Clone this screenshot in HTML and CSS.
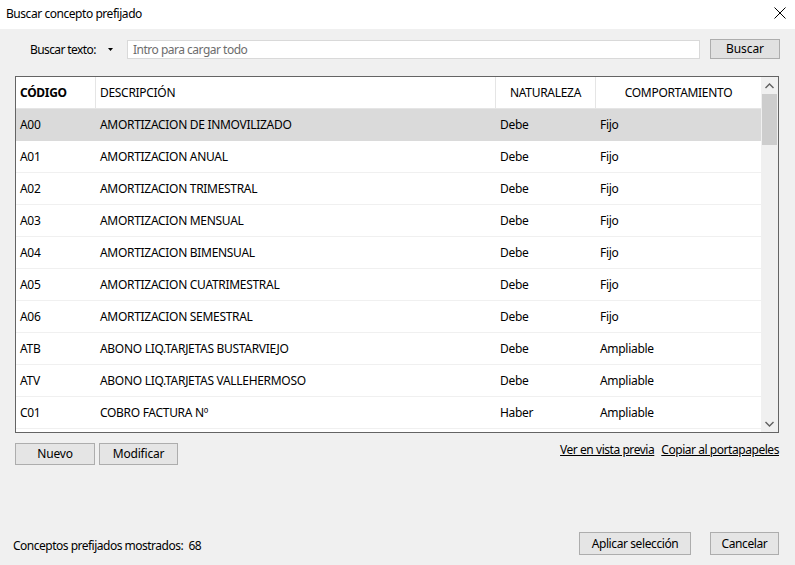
FILE: index.html
```html
<!DOCTYPE html>
<html lang="es">
<head>
<meta charset="utf-8">
<title>Buscar concepto prefijado</title>
<link rel="stylesheet" href="styles.css">
</head>
<body>
<div class="window">
  <div class="titlebar">
    <span class="title">Buscar concepto prefijado</span>
    <svg class="close" width="12" height="12" viewBox="0 0 12 12"><path d="M0.5 0.5 L11.5 11.5 M11.5 0.5 L0.5 11.5" stroke="#000" stroke-width="1" fill="none"/></svg>
  </div>
  <div class="search">
    <span class="search-label">Buscar texto:</span>
    <svg class="caret" width="5" height="3" viewBox="0 0 5 3"><path d="M0 0 H5 L2.5 3 Z" fill="#000"/></svg>
    <div class="input">Intro para cargar todo</div>
    <button class="btn btn-search">Buscar</button>
  </div>
  <div class="grid">
    <div class="grid-main">
      <div class="row head">
        <div class="c c1 bold">CÓDIGO</div>
        <div class="c c2">DESCRIPCIÓN</div>
        <div class="c c3 center">NATURALEZA</div>
        <div class="c c4 center">COMPORTAMIENTO</div>
      </div>
      <div class="row sel"><div class="c c1">A00</div><div class="c c2">AMORTIZACION DE INMOVILIZADO</div><div class="c c3">Debe</div><div class="c c4">Fijo</div></div>
      <div class="row"><div class="c c1">A01</div><div class="c c2">AMORTIZACION ANUAL</div><div class="c c3">Debe</div><div class="c c4">Fijo</div></div>
      <div class="row"><div class="c c1">A02</div><div class="c c2">AMORTIZACION TRIMESTRAL</div><div class="c c3">Debe</div><div class="c c4">Fijo</div></div>
      <div class="row"><div class="c c1">A03</div><div class="c c2">AMORTIZACION MENSUAL</div><div class="c c3">Debe</div><div class="c c4">Fijo</div></div>
      <div class="row"><div class="c c1">A04</div><div class="c c2">AMORTIZACION BIMENSUAL</div><div class="c c3">Debe</div><div class="c c4">Fijo</div></div>
      <div class="row"><div class="c c1">A05</div><div class="c c2">AMORTIZACION CUATRIMESTRAL</div><div class="c c3">Debe</div><div class="c c4">Fijo</div></div>
      <div class="row"><div class="c c1">A06</div><div class="c c2">AMORTIZACION SEMESTRAL</div><div class="c c3">Debe</div><div class="c c4">Fijo</div></div>
      <div class="row"><div class="c c1">ATB</div><div class="c c2">ABONO LIQ.TARJETAS BUSTARVIEJO</div><div class="c c3">Debe</div><div class="c c4">Ampliable</div></div>
      <div class="row"><div class="c c1">ATV</div><div class="c c2">ABONO LIQ.TARJETAS VALLEHERMOSO</div><div class="c c3">Debe</div><div class="c c4">Ampliable</div></div>
      <div class="row"><div class="c c1">C01</div><div class="c c2">COBRO FACTURA Nº</div><div class="c c3">Haber</div><div class="c c4">Ampliable</div></div>
      <div class="row"><div class="c c1"></div><div class="c c2"></div><div class="c c3"></div><div class="c c4"></div></div>
    </div>
    <div class="scrollbar">
      <div class="arrow"><svg width="9" height="6" viewBox="0 0 9 6"><path d="M0.5 5 L4.5 1 L8.5 5" stroke="#606060" stroke-width="1.4" fill="none"/></svg></div>
      <div class="track"><div class="thumb"></div></div>
      <div class="arrow"><svg width="9" height="6" viewBox="0 0 9 6"><path d="M0.5 1 L4.5 5 L8.5 1" stroke="#606060" stroke-width="1.4" fill="none"/></svg></div>
    </div>
  </div>
  <div class="actions">
    <button class="btn btn-small">Nuevo</button>
    <button class="btn btn-small">Modificar</button>
    <div class="links">
      <a class="link">Ver en vista previa</a>
      <a class="link">Copiar al portapapeles</a>
    </div>
  </div>
  <div class="footer">
    <span class="count">Conceptos prefijados mostrados:&nbsp; 68</span>
    <div class="footer-btns">
      <button class="btn btn-apply">Aplicar selección</button>
      <button class="btn btn-cancel">Cancelar</button>
    </div>
  </div>
</div>
</body>
</html>
```
FILE: styles.css
```css
* { box-sizing: border-box; }
html, body { margin: 0; padding: 0; }
body {
  width: 795px;
  height: 565px;
  overflow: hidden;
  background: #f0f0f0;
  font-family: "Noto Sans", "Open Sans", sans-serif;
  font-size: 12px;
  color: #000;
}
.window { display: flex; flex-direction: column; height: 565px; }
.titlebar {
  height: 29px;
  background: #fff;
  display: flex;
  align-items: center;
  justify-content: space-between;
  padding: 0 9px 0 6px;
  flex-shrink: 0;
}
.title { font-size: 12px; letter-spacing: -0.45px; margin-top: -2px; }
.close { margin-top: -4px; }
.search {
  display: flex;
  align-items: center;
  height: 20px;
  margin-top: 10px;
  padding-left: 30px;
}
.search-label { letter-spacing: -0.6px; width: 78px; }
.caret { margin-left: 0; margin-right: 14px; }
.input {
  width: 573px;
  height: 19px;
  background: #fff;
  border: 1px solid #d9d9d9;
  color: #6d6d6d;
  padding: 0 0 0 5px;
  line-height: 17px;
  letter-spacing: -0.5px;
}
.btn {
  font-family: inherit;
  font-size: 12px;
  color: #000;
  border: 1px solid #adadad;
  background: #e1e1e1;
  padding: 0;
  margin: 0;
  line-height: 1;
  letter-spacing: -0.4px;
}
.btn-search { width: 70px; height: 20px; margin-left: 10px; letter-spacing: -0.1px; }
.grid {
  margin: 17px 0 0 15px;
  width: 764px;
  height: 357px;
  border: 1px solid #646464;
  background: #fff;
  display: flex;
  overflow: hidden;
}
.grid-main { width: 745px; overflow: hidden; flex-shrink: 0; }
.row {
  display: flex;
  height: 32px;
  border-bottom: 1px solid #f0f0f0;
  align-items: center;
}
.row.head { height: 32px; border-bottom: 1px solid #e5e5e5; }
.row.head .c { border-right: 1px solid #e5e5e5; }
.row.head .c4 { border-right: none; }
.row.sel { background: #dadada; border-bottom-color: #dadada; }
.c {
  height: 100%;
  display: flex;
  align-items: center;
  padding-left: 4px;
  white-space: nowrap;
  overflow: hidden;
  letter-spacing: -0.3px;
}
.c1 { width: 80px; }
.c2 { width: 400px; }
.c3 { width: 100px; }
.c4 { width: 165px; }
.bold { font-weight: bold; }
.center { justify-content: center; padding-left: 0; }
.scrollbar {
  width: 17px;
  background: #f0f0f0;
  display: flex;
  flex-direction: column;
}
.arrow { height: 17px; display: flex; align-items: center; justify-content: center; }
.track { flex: 1; }
.thumb { width: 15px; margin: 0 1px; height: 51px; background: #cdcdcd; }
.actions {
  display: flex;
  align-items: center;
  margin: 10px 16px 0 15px;
  height: 22px;
}
.btn-small { width: 80px; height: 22px; background: #e5e5e5; margin-right: 4px; letter-spacing: -0.2px; }
.btn-small + .btn-small { width: 79px; }
.links { margin-left: auto; display: flex; gap: 7px; margin-top: -10px; }
.link { text-decoration: underline; color: #000; letter-spacing: -0.45px; }
.footer {
  margin-top: auto;
  margin-bottom: 10px;
  display: flex;
  align-items: center;
  padding: 0 16px 0 13px;
  height: 23px;
}
.count { letter-spacing: -0.5px; margin-top: 4px; }
.footer-btns { margin-left: auto; display: flex; gap: 19px; }
.btn-apply { width: 112px; height: 23px; background: #e5e5e5; }
.btn-cancel { width: 69px; height: 23px; background: #e5e5e5; }
```
